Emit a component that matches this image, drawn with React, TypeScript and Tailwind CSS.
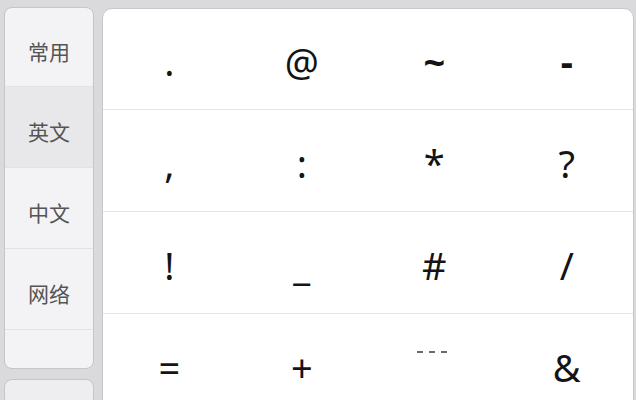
const tabs = ["常用", "英文", "中文", "网络"];

const rows = [
  [".", "@", "~", "-"],
  [",", ":", "*", "?"],
  ["!", "_", "#", "/"],
  ["=", "+", "---", "&"],
];

export default function App() {
  return (
    <div className="w-[636px] h-[400px] overflow-hidden bg-[#dadadc] flex pt-[7px] pl-[4px]">
      {/* left category column */}
      <div className="w-[90px] flex flex-col gap-[10px] shrink-0">
        <div className="h-[362px] shrink-0 rounded-[8px] border border-[#c6c6c8] bg-[#f3f3f5] overflow-hidden flex flex-col">
          {tabs.map((t, i) => (
            <div
              key={t}
              className={`${i === 0 ? "h-[79px]" : "h-[81px]"} shrink-0 border-b border-[#e2e2e4] flex items-center justify-center pt-[10px] text-[21px] text-[#555] ${
                i === 1 ? "bg-[#e8e8ea]" : ""
              }`}
              style={{ fontFamily: '"Noto Sans CJK SC", "Noto Sans", sans-serif' }}
            >
              {t}
            </div>
          ))}
          <div className="flex-1" />
        </div>
        <div className="h-[40px] shrink-0 rounded-[8px] border border-[#c6c6c8] bg-[#eeeef0]" />
      </div>

      {/* symbol grid */}
      <div
        className="ml-[8px] mt-[1px] w-[532px] h-[420px] shrink-0 rounded-t-[10px] border border-[#c8c8ca] bg-white overflow-hidden"
        style={{ fontFamily: '"Noto Sans", sans-serif' }}
      >
        {rows.map((row, r) => (
          <div
            key={r}
            className={`${r === 0 ? "h-[101px]" : "h-[102px]"} grid grid-cols-4 border-b border-[#e4e4e6]`}
          >
            {row.map((s) => (
              <div
                key={s}
                className={`flex justify-center ${r === 0 ? "pt-[33px]" : "pt-[34px]"} text-[38px] leading-[38px] text-[#141414] ${
                  s === "~" || s === "-" ? "font-bold" : ""
                }`}
              >
                {s === "---" ? (
                  <div className="flex gap-[6px] mt-[3px] -ml-[4px] h-[2px]">
                    <span className="w-[6px] h-[2px] bg-[#6a6a6a]" />
                    <span className="w-[6px] h-[2px] bg-[#6a6a6a]" />
                    <span className="w-[6px] h-[2px] bg-[#6a6a6a]" />
                  </div>
                ) : (
                  s
                )}
              </div>
            ))}
          </div>
        ))}
      </div>
    </div>
  );
}
